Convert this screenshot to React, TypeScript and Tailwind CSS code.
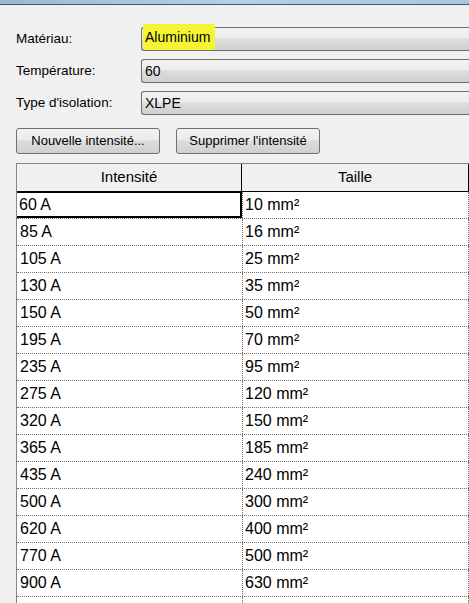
import React from "react";

const rows = [
  ["60 A", "10"],
  ["85 A", "16"],
  ["105 A", "25"],
  ["130 A", "35"],
  ["150 A", "50"],
  ["195 A", "70"],
  ["235 A", "95"],
  ["275 A", "120"],
  ["320 A", "150"],
  ["365 A", "185"],
  ["435 A", "240"],
  ["500 A", "300"],
  ["620 A", "400"],
  ["770 A", "500"],
  ["900 A", "630"],
  ["", ""],
];

function Field({ children }: { children: React.ReactNode }) {
  return (
    <div className="h-[24px] flex-1 rounded-l-[3px] border border-r-0 border-[#707070] bg-[linear-gradient(#f2f2f2_0%,#ebebeb_45%,#dddddd_50%,#cfcfcf_100%)] flex items-center pl-[3px] text-[14px] text-black">
      {children}
    </div>
  );
}

function Button({ children }: { children: React.ReactNode }) {
  return (
    <button className="h-[26px] w-[144px] rounded-[3px] border border-[#707070] bg-[linear-gradient(#f2f2f2_0%,#ebebeb_45%,#dddddd_50%,#cfcfcf_100%)] text-[13px] text-black">
      {children}
    </button>
  );
}

export default function App() {
  return (
    <div
      className="w-[469px] h-[603px] overflow-hidden bg-[#f0f0f0] text-black"
      style={{ fontFamily: '"Liberation Sans", Arial, sans-serif' }}
    >
      <div className="h-[4px] bg-[linear-gradient(90deg,#9ab8d6,#b6cfe6,#a9c6e2)]" />
      <div className="h-px bg-[#4a5563]" />

      <div className="flex flex-col gap-[8px] pt-[22px] pl-[16px]">
        <div className="flex items-center">
          <span className="w-[125px] text-[13.5px]">Matériau:</span>
          <Field>
            <span className="-ml-[2px] -mt-[5px] pl-[2px] pr-[5px] pt-[3px] pb-[2px] bg-[#f4f432] rounded-[3px]">Aluminium</span>
          </Field>
        </div>
        <div className="flex items-center">
          <span className="w-[125px] text-[13.5px]">Température:</span>
          <Field>60</Field>
        </div>
        <div className="flex items-center">
          <span className="w-[125px] text-[13.5px]">Type d'isolation:</span>
          <Field>XLPE</Field>
        </div>
      </div>

      <div className="flex gap-[16px] pl-[16px] mt-[13px]">
        <Button>Nouvelle intensité...</Button>
        <Button>Supprimer l'intensité</Button>
      </div>

      <div className="ml-[16px] mt-[9px] border-l border-t border-[#828790] bg-white">
        <div className="flex h-[28px] bg-[#f0f0f0] border-b border-black text-[15px]">
          <div className="w-[225px] flex items-center justify-center border-r border-black">Intensité</div>
          <div className="flex-1 flex items-center justify-center border-r border-black">Taille</div>
        </div>
        {rows.map(([a, s], i) => (
          <div key={i} className="flex h-[27px] border-b border-dotted border-[#6f6f6f] text-[16px]">
            <div
              className={
                i === 0
                  ? "w-[225px] -mt-px flex items-center pl-[2px] border-2 border-l-0 border-black"
                  : "w-[225px] flex items-center pl-[3px]"
              }
            >
              {a}
            </div>
            <div className="flex-1 flex items-center pl-[2px] border-l border-r border-dotted border-[#6f6f6f]">
              {s && <span>{s} mm²</span>}
            </div>
          </div>
        ))}
      </div>
    </div>
  );
}
